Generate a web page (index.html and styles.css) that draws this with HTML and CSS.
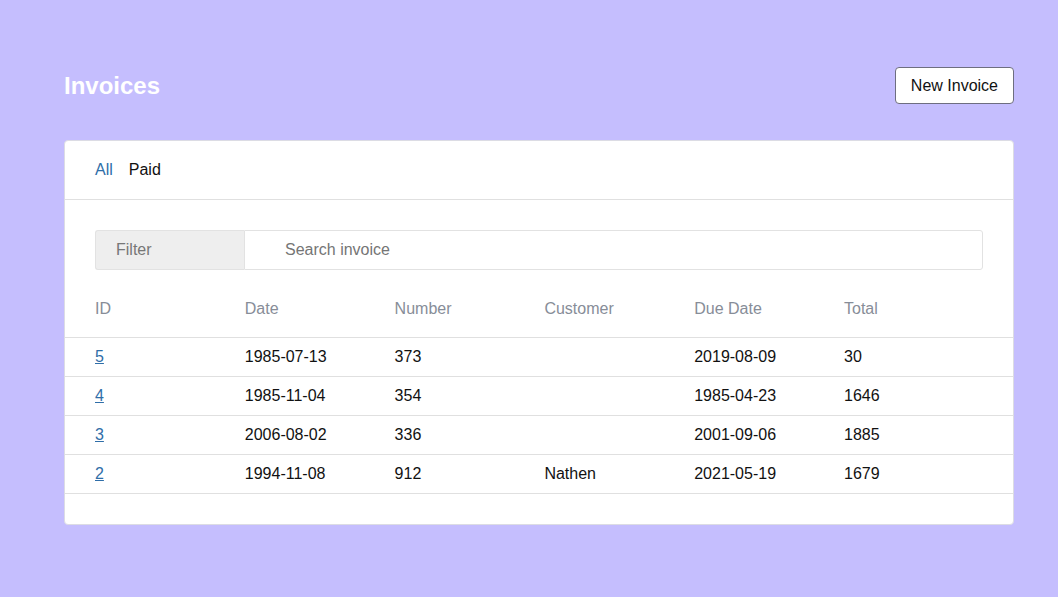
FILE: index.html
```html
<!DOCTYPE html>
<html>
<head>
<meta charset="utf-8">
<link rel="stylesheet" href="styles.css">
</head>
<body>
<div class="page">
  <header class="top">
    <h1 class="title">Invoices</h1>
    <button class="btn">New Invoice</button>
  </header>
  <section class="card">
    <nav class="tabs">
      <a class="tab active">All</a>
      <a class="tab">Paid</a>
    </nav>
    <div class="filter">
      <span class="filter-label">Filter</span>
      <input class="search" type="text" placeholder="Search invoice">
    </div>
    <div class="table">
      <div class="row head">
        <div>ID</div><div>Date</div><div>Number</div><div>Customer</div><div>Due Date</div><div>Total</div>
      </div>
      <div class="row">
        <div><a class="link">5</a></div><div>1985-07-13</div><div>373</div><div></div><div>2019-08-09</div><div>30</div>
      </div>
      <div class="row">
        <div><a class="link">4</a></div><div>1985-11-04</div><div>354</div><div></div><div>1985-04-23</div><div>1646</div>
      </div>
      <div class="row">
        <div><a class="link">3</a></div><div>2006-08-02</div><div>336</div><div></div><div>2001-09-06</div><div>1885</div>
      </div>
      <div class="row">
        <div><a class="link">2</a></div><div>1994-11-08</div><div>912</div><div>Nathen</div><div>2021-05-19</div><div>1679</div>
      </div>
    </div>
  </section>
</div>
</body>
</html>
```
FILE: styles.css
```css
html, body {
  margin: 0;
  padding: 0;
  background: #c5befe;
  font-family: "Liberation Sans", Arial, sans-serif;
  font-size: 16px;
  color: #111;
}
.page {
  padding: 67px 44px 0 64px;
  width: 950px;
}
.top {
  display: flex;
  align-items: center;
  justify-content: space-between;
  height: 37px;
  margin-bottom: 36px;
}
.title {
  margin: 0;
  color: #fff;
  font-size: 24px;
  font-weight: bold;
  line-height: 28px;
}
.btn {
  height: 37px;
  padding: 0 15px;
  background: #fff;
  border: 1px solid #6e6e80;
  border-radius: 4px;
  font-family: inherit;
  font-size: 16px;
  color: #111;
  line-height: 18px;
}
.card {
  background: #fff;
  border: 1px solid #dcdce4;
  border-radius: 4px;
  padding-bottom: 30px;
}
.tabs {
  display: flex;
  gap: 16px;
  padding: 20px 30px;
  line-height: 18px;
  border-bottom: 1px solid #e0e0e0;
}
.tab {
  color: #111;
}
.tab.active {
  color: #2f6ea8;
}
.filter {
  display: flex;
  margin: 30px 30px 0 30px;
  height: 40px;
}
.filter-label {
  box-sizing: border-box;
  width: 149px;
  display: flex;
  align-items: center;
  padding-left: 20px;
  background: #eeeeee;
  color: #777;
  border: 1px solid #e2e2e2;
  border-right: none;
  border-radius: 3px 0 0 3px;
}
.search {
  flex: 1;
  box-sizing: border-box;
  height: 40px;
  border: 1px solid #e2e2e2;
  border-radius: 0 3px 3px 0;
  padding: 0 0 0 40px;
  font-family: inherit;
  font-size: 16px;
  outline: none;
}
.search::placeholder {
  color: #757575;
}
.table {
  display: flex;
  flex-direction: column;
}
.row {
  display: grid;
  grid-template-columns: repeat(6, 149.8px);
  padding: 10px 30px;
  line-height: 18px;
  border-bottom: 1px solid #e0e0e0;
}
.row.head {
  padding: 30px 30px 19px 30px;
  color: #878d98;
}
.link {
  color: #2f6ea8;
  text-decoration: underline;
}
```
